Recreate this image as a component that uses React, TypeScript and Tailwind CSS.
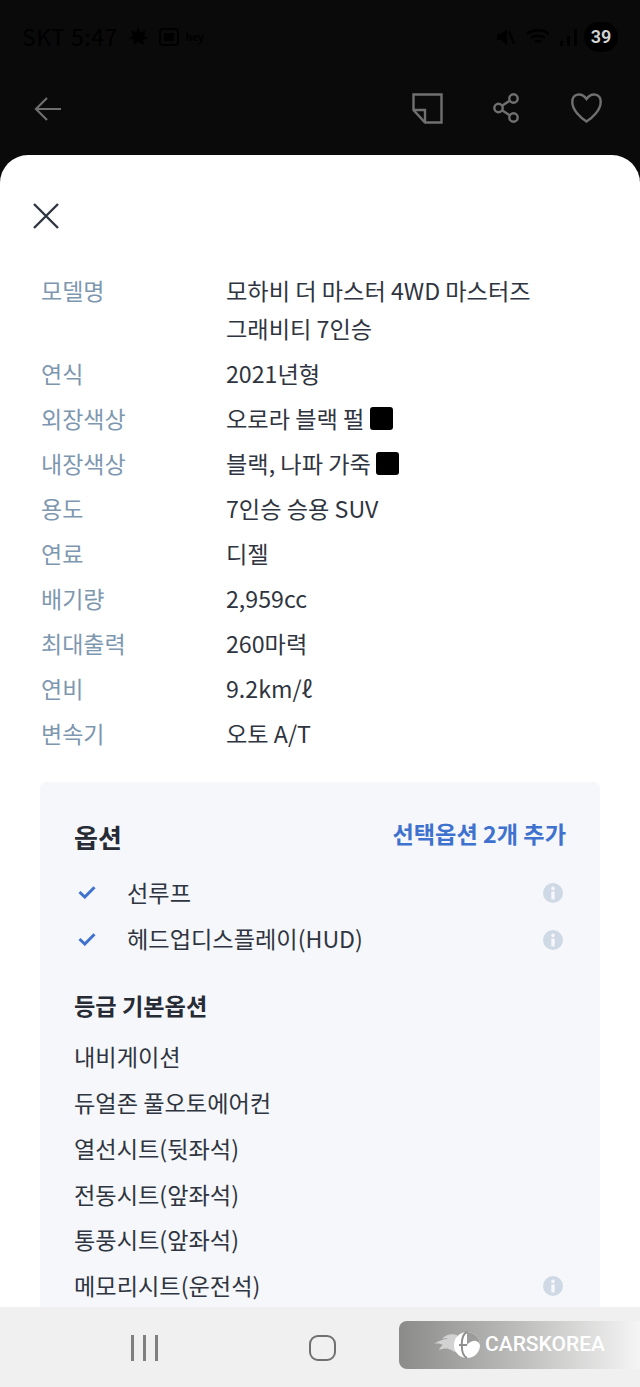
const FONT = "font-['Noto_Sans_CJK_KR','Noto_Sans',sans-serif]";

const specs = [
  { label: "연식", value: "2021년형" },
  { label: "외장색상", value: "오로라 블랙 펄", swatch: true },
  { label: "내장색상", value: "블랙, 나파 가죽", swatch: true },
  { label: "용도", value: "7인승 승용 SUV" },
  { label: "연료", value: "디젤" },
  { label: "배기량", value: "2,959cc" },
  { label: "최대출력", value: "260마력" },
  { label: "연비", value: "9.2km/ℓ" },
  { label: "변속기", value: "오토 A/T" },
];

const baseOptions = [
  { name: "내비게이션" },
  { name: "듀얼존 풀오토에어컨" },
  { name: "열선시트(뒷좌석)" },
  { name: "전동시트(앞좌석)" },
  { name: "통풍시트(앞좌석)" },
  { name: "메모리시트(운전석)", info: true },
];

function InfoIcon() {
  return (
    <svg width="20" height="20" viewBox="0 0 20 20" className="shrink-0">
      <circle cx="10" cy="10" r="10" fill="#cfd9e5" />
      <circle cx="10" cy="5.4" r="1.8" fill="#f5f7fa" />
      <rect x="8.3" y="8.4" width="3.4" height="8" rx="0.6" fill="#f5f7fa" />
    </svg>
  );
}

function CheckIcon() {
  return (
    <svg width="18" height="14" viewBox="0 0 18 14" fill="none" className="shrink-0">
      <path d="M1.5 7 L6.8 12 L16.5 2.2" stroke="#3f72cf" strokeWidth="3" />
    </svg>
  );
}

function StatusBar() {
  return (
    <div className="h-[72px] flex items-center justify-between pl-[22px] pr-[22px] pt-[1px]">
      <div className="flex items-center gap-[9px] text-black text-[23px] leading-none">
        <span className="tracking-[0.5px]">SKT 5:47</span>
        <svg width="22" height="22" viewBox="0 0 22 22" fill="#000">
          <path d="M11 1l2.4 5.6L19 4l-2 6 4 2-5 2 1 5-6-3-5 3 1-5-5-2 4-2-2-6 5.6 2.6z" />
        </svg>
        <svg width="22" height="22" viewBox="0 0 22 22" fill="none" stroke="#000" strokeWidth="2">
          <rect x="2" y="3" width="18" height="16" rx="3" />
          <rect x="7" y="8" width="8" height="6" fill="#000" />
        </svg>
        <span className="text-[10px] font-bold -ml-[3px]">hey</span>
      </div>
      <div className="flex items-center">
        <svg width="20" height="20" viewBox="0 0 20 20" fill="#000" className="mr-[10px]">
          <path d="M1 7h4l6-5v16l-6-5H1zM14 4l5 12-2 1-5-12z" />
        </svg>
        <svg width="24" height="20" viewBox="0 0 24 20" fill="none" stroke="#000" strokeWidth="2.4" className="mr-[9px]">
          <path d="M1 7c6-5 16-5 22 0M5 11c4-3 10-3 14 0M9 15c2-1.500 4-1.500 6 0" />
        </svg>
        <svg width="20" height="20" viewBox="0 0 20 20" fill="#000" className="mr-[5px]">
          <rect x="1" y="14" width="3" height="5" />
          <rect x="8" y="9" width="3" height="10" />
          <rect x="15" y="2" width="3" height="17" />
        </svg>
        <span className="w-[34px] h-[30px] rounded-full bg-black text-[#d4d4d4] text-[18px] font-semibold font-['Roboto',sans-serif] flex items-center justify-center">
          39
        </span>
      </div>
    </div>
  );
}

function TopBar() {
  return (
    <div className="h-[83px] flex items-start justify-between pl-[34px] pr-[38px] pt-[21px]">
      <svg width="28" height="28" viewBox="0 0 28 28" fill="none" stroke="#6e6e6e" strokeWidth="2.2" className="mt-[2px]">
        <path d="M27 14H2M13 3L2 14l11 11" />
      </svg>
      <div className="flex items-start">
        <svg width="31" height="31" viewBox="0 0 31 31" fill="none" stroke="#707070" strokeWidth="2.4" className="mr-[50px]">
          <path d="M1.500 1.500h28v28H13L1.500 17z" />
          <path d="M1.500 17h11.500v12" />
        </svg>
        <svg width="26" height="30" viewBox="0 0 26 30" fill="none" stroke="#707070" strokeWidth="2.4" className="mr-[52px]">
          <circle cx="20.500" cy="5.500" r="4.200" />
          <circle cx="5.500" cy="15" r="4.200" />
          <circle cx="20.500" cy="24.500" r="4.200" />
          <path d="M9 12.800l8-5.200M9 17.200l8 5.200" />
        </svg>
        <svg width="31" height="30" viewBox="0 0 31 30" fill="none" stroke="#707070" strokeWidth="2.4">
          <path d="M15.500 6C13 2.500 9.500 1 6.500 1.600 3 2.300 1.300 5.500 1.300 9c0 8 8 15.500 14.200 19.500C21.700 24.500 29.700 17 29.700 9c0-3.500-1.700-6.700-5.200-7.400C21.500 1 18 2.500 15.500 6z" />
        </svg>
      </div>
    </div>
  );
}

function SpecRow({ label, value, swatch }: { label: string; value: string; swatch?: boolean }) {
  return (
    <div className="flex h-[45px] items-center">
      <span className="w-[185px] text-[23px] text-[#7e97b0]">{label}</span>
      <span className="flex items-center gap-[5.500px] text-[#2f3540]">
        {value}
        {swatch && <span className="w-[23px] h-[23px] rounded-[3px] bg-black" />}
      </span>
    </div>
  );
}

export default function App() {
  return (
    <div className={`relative w-[640px] h-[1387px] overflow-hidden bg-[#0a0a0a] flex flex-col ${FONT}`}>
      <StatusBar />
      <TopBar />

      {/* sheet */}
      <div className="flex-1 min-h-0 overflow-hidden bg-white rounded-t-[28px] px-[40px] text-[23.200px]">
        <svg width="28" height="28" viewBox="0 0 28 28" fill="none" stroke="#2f3540" strokeWidth="2.4" className="-ml-[8px] mt-[47px]">
          <path d="M2 2l24 24M26 2L2 26" />
        </svg>

        <div className="mt-[41px] flex items-start">
          <span className="w-[186px] pl-[1px] text-[23px] text-[#7e97b0] leading-[38px]">모델명</span>
          <span className="text-[#2f3540] leading-[38px] pr-[40px] whitespace-nowrap">
            모하비 더 마스터 4WD 마스터즈
            <br />
            그래비티 7인승
          </span>
        </div>

        <div className="mt-[4px] pl-[1px]">
          {specs.map((s) => (
            <SpecRow key={s.label} {...s} />
          ))}
        </div>

        {/* options */}
        <div className="mt-[26px] bg-[#f5f7fa] rounded-[6px] px-[34px] pt-[36px] pb-[40px] text-[#2f3540]">
          <div className="flex items-center justify-between h-[36px]">
            <span className="text-[26px] font-bold text-[#262b36]">옵션</span>
            <span className="text-[#3f72cf] font-bold -mt-[6px]">선택옵션 2개 추가</span>
          </div>

          <div className="mt-[15px] flex flex-col">
            {["선루프", "헤드업디스플레이(HUD)"].map((name) => (
              <div key={name} className="flex items-center h-[46.500px]">
                <span className="w-[53px] pl-[4px]">
                  <CheckIcon />
                </span>
                <span className="flex-1">{name}</span>
                <span className="mr-[3px] mt-[2px]">
                  <InfoIcon />
                </span>
              </div>
            ))}
          </div>

          <div className="mt-[25px] font-bold text-[#262b36] h-[36px] leading-[36px]">등급 기본옵션</div>

          <div className="mt-[11px] flex flex-col">
            {baseOptions.map((o) => (
              <div key={o.name} className="flex items-center h-[45.700px]">
                <span className="flex-1">{o.name}</span>
                {o.info && (
                  <span className="mr-[3px] mt-[2px]">
                    <InfoIcon />
                  </span>
                )}
              </div>
            ))}
          </div>
        </div>
      </div>

      {/* android nav bar */}
      <div className="absolute left-0 right-0 bottom-0 h-[80px] bg-[#f0f0f0]">
        <div className="absolute left-[131px] top-[28px] flex gap-[9.500px]">
          <span className="w-[2.500px] h-[26px] bg-[#808080]" />
          <span className="w-[2.500px] h-[26px] bg-[#808080]" />
          <span className="w-[2.500px] h-[26px] bg-[#808080]" />
        </div>
        <div className="absolute left-[309px] top-[28px] w-[27px] h-[26px] rounded-[9px] border-[2.500px] border-[#707070]" />
      </div>

      {/* watermark */}
      <div className="absolute left-[399px] top-[1321px] w-[241px] h-[48px] rounded-l-[8px] bg-gradient-to-r from-[#8b8b8a] via-[#bdbdbc] via-50% to-[#f5f5f5] flex items-center pl-[34px] gap-[5px]">
        <svg width="48" height="30" viewBox="0 0 48 30" className="shrink-0">
          <path d="M24 5C18 3 12 5 9 9c3-1 5-1 6 0-5 0-10 2-14 5 4-1 7 0 9 1-2 1-3 3-4 5 5-2 9-2 12 0 3 2 6 3 10 3z" fill="#d2d2d2" />
          <circle cx="34" cy="15" r="13" fill="#ffffff" />
          <path d="M34 2a13 13 0 0 1 13 13c-1-3-4-5-7-4-3 1-5 2-6 4z" fill="#9c9c9b" />
          <path d="M34 2c-7 3-7 23 0 26M26 15h8" fill="none" stroke="#8f8f8e" strokeWidth="2" />
        </svg>
        <span className="text-white text-[21px] font-medium font-['Roboto',sans-serif] -ml-[1px]">CARSKOREA</span>
      </div>
    </div>
  );
}
